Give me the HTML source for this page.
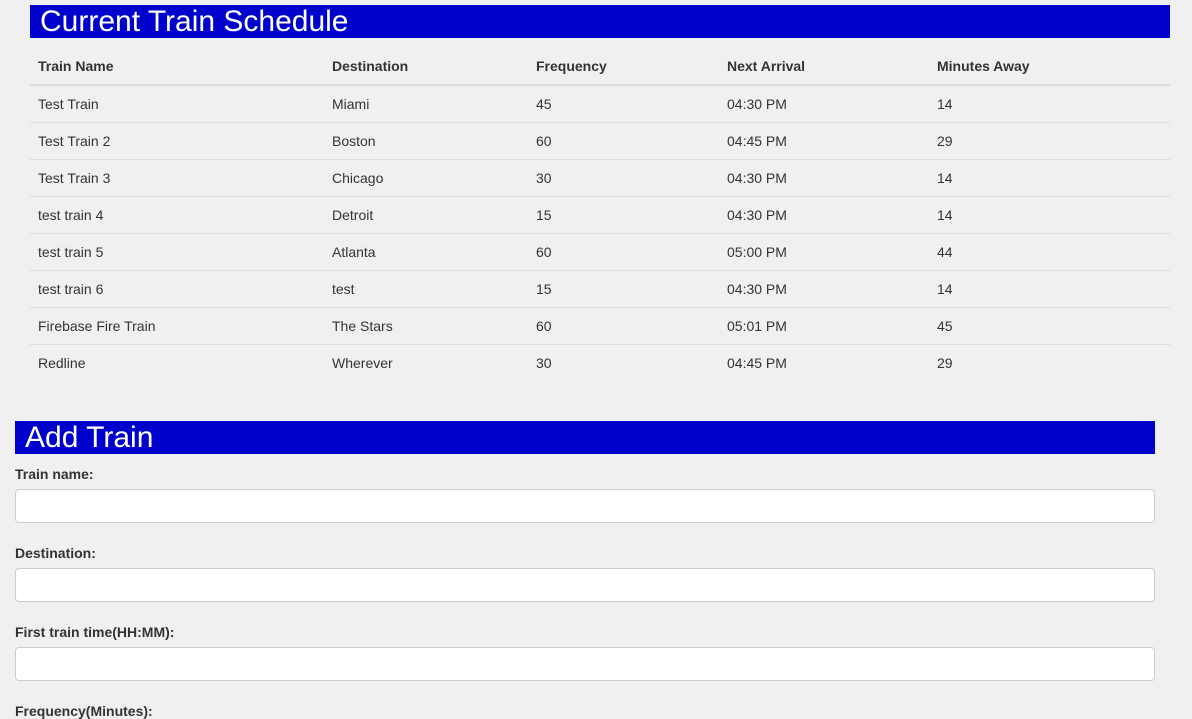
<!DOCTYPE html>
<html><head><style>
body{margin:0;background:#f0f0f0;font-family:"Liberation Sans",sans-serif;color:#333;font-size:14px;width:1192px;height:712px;overflow:hidden;position:relative}
.bar{position:absolute;background:#0000cc;color:#fff;font-size:30px;height:33px;line-height:34px;padding-left:10px;box-sizing:border-box}
table{position:absolute;left:30px;top:48px;width:1140px;border-collapse:collapse}
td,th{text-align:left;padding:0 8px;height:36px;border-top:1px solid #ddd;vertical-align:middle}
th{border-top:none;border-bottom:2px solid #ddd;height:36px;font-weight:bold}
.lbl{position:absolute;left:15px;font-weight:bold;font-size:14px}
.inp{position:absolute;left:15px;width:1140px;height:34px;box-sizing:border-box;background:#fff;border:1px solid #ccc;border-radius:4px}
</style></head><body>
<div class="bar" style="left:30px;top:5px;width:1140px">Current Train Schedule</div>
<table>
<tr><th style="width:278px">Train Name</th><th style="width:188px">Destination</th><th style="width:175px">Frequency</th><th style="width:194px">Next Arrival</th><th>Minutes Away</th></tr>
<tr><td>Test Train</td><td>Miami</td><td>45</td><td>04:30 PM</td><td>14</td></tr>
<tr><td>Test Train 2</td><td>Boston</td><td>60</td><td>04:45 PM</td><td>29</td></tr>
<tr><td>Test Train 3</td><td>Chicago</td><td>30</td><td>04:30 PM</td><td>14</td></tr>
<tr><td>test train 4</td><td>Detroit</td><td>15</td><td>04:30 PM</td><td>14</td></tr>
<tr><td>test train 5</td><td>Atlanta</td><td>60</td><td>05:00 PM</td><td>44</td></tr>
<tr><td>test train 6</td><td>test</td><td>15</td><td>04:30 PM</td><td>14</td></tr>
<tr><td>Firebase Fire Train</td><td>The Stars</td><td>60</td><td>05:01 PM</td><td>45</td></tr>
<tr><td>Redline</td><td>Wherever</td><td>30</td><td>04:45 PM</td><td>29</td></tr>
</table>
<div class="bar" style="left:15px;top:421px;width:1140px">Add Train</div>
<div class="lbl" style="top:466px">Train name:</div>
<div class="inp" style="top:489px"></div>
<div class="lbl" style="top:545px">Destination:</div>
<div class="inp" style="top:568px"></div>
<div class="lbl" style="top:624px">First train time(HH:MM):</div>
<div class="inp" style="top:647px"></div>
<div class="lbl" style="top:703px">Frequency(Minutes):</div>
</body></html>
